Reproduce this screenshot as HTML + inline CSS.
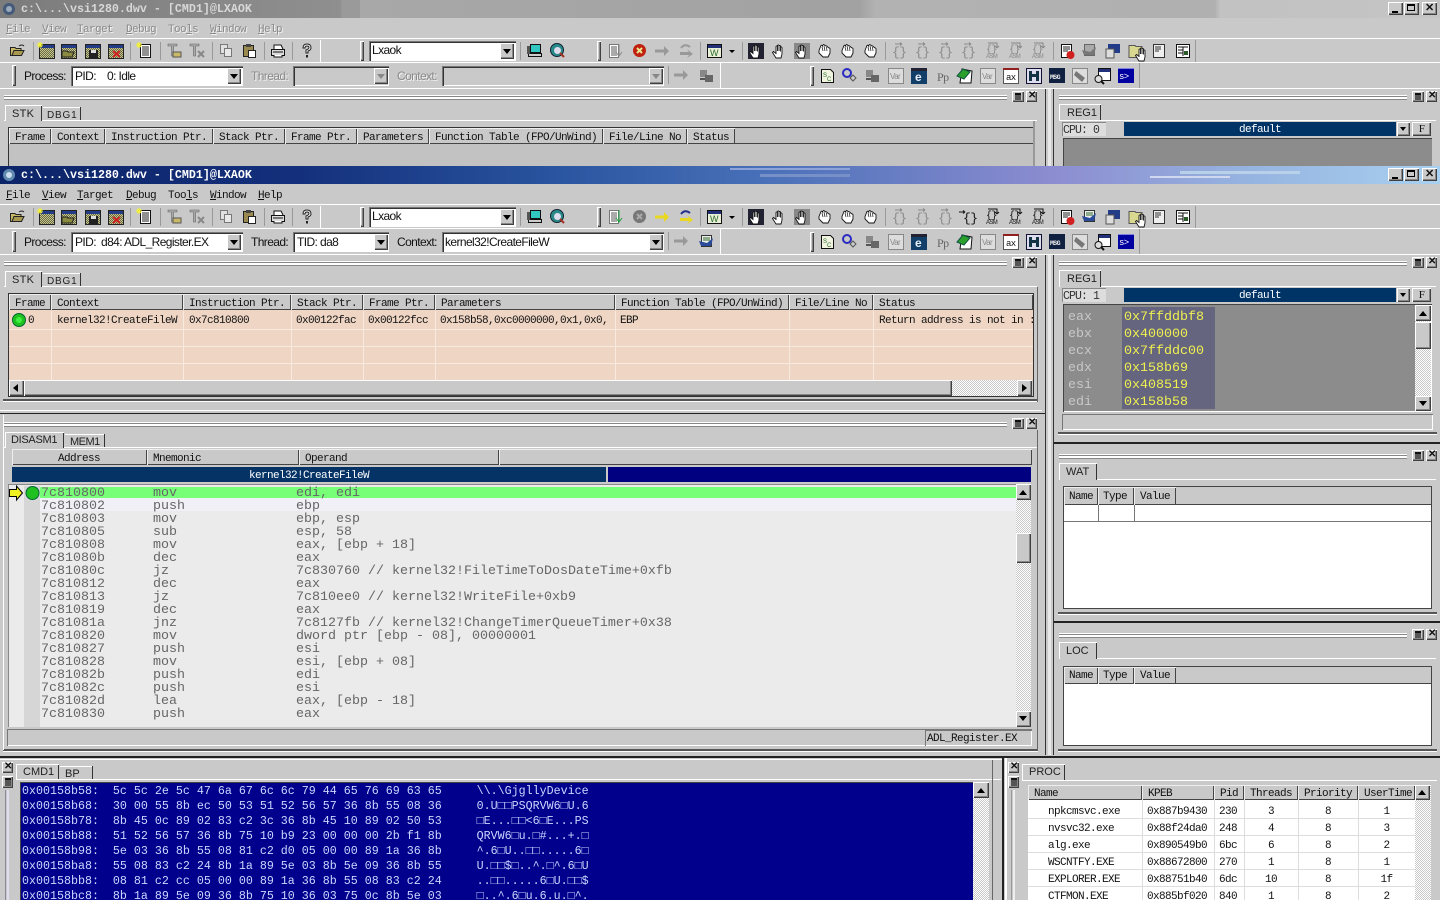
<!DOCTYPE html>
<html><head><meta charset="utf-8"><title>WinDbg</title>
<style>
html,body{margin:0;padding:0;background:#c9c9c9}
#p{position:relative;width:1440px;height:900px;overflow:hidden;background:#c9c9c9;font:11px/12px "Liberation Mono",monospace;letter-spacing:-.6px;color:#111}
#p div,#p span.t,#p svg.o{position:absolute}
.t{white-space:pre}
.s{font-family:"Liberation Sans",sans-serif;font-size:12px;line-height:14px;letter-spacing:-.6px;color:#111}
.u{text-decoration:underline}
.r{background:#c9c9c9;box-shadow:inset 1px 1px #fff,inset -1px -1px #404040,inset -2px -2px #888}
.n{box-shadow:inset 1px 1px #777,inset 2px 2px #333,inset -1px -1px #fff}
.h{background:#c9c9c9;box-shadow:inset 1px 1px #eee,inset -1px -1px #444;line-height:20px;padding-left:6px;box-sizing:border-box;white-space:pre;overflow:hidden}
.g{height:1px;background:#fff;border-bottom:1px solid #888;box-shadow:0 2px #fff,0 3px #888}
.d{background:repeating-conic-gradient(#fff 0 25%,#c9c9c9 0 50%) 0 0/2px 2px}
.tab{background:#c9c9c9;box-shadow:inset 1px 1px #fff,inset -1px 0 #333;font:11px/16px "Liberation Sans",sans-serif;letter-spacing:0;padding-left:7px;box-sizing:border-box;color:#222}
.tb{box-shadow:inset -1px 0 #333,inset 0 1px #fff;padding-top:2px}
.l{background:#999;width:1px}
.code{font:13.33px/13px "Liberation Mono",monospace;letter-spacing:0;color:#666;white-space:pre}
.reg{font:13.33px/17px "Liberation Mono",monospace;letter-spacing:0;white-space:pre}
.hex{font:11.67px/15px "Liberation Mono","Noto Sans CJK SC",monospace;letter-spacing:0;color:#ccd6ff;white-space:pre}
.c{text-align:center}
.off{color:#8a8a8a;text-shadow:1px 1px #f2f2f2}
</style></head><body><div id="p">

<svg width="0" height="0" style="position:absolute"><defs>
<pattern id="dit" width="2" height="2" patternUnits="userSpaceOnUse"><rect width="2" height="2" fill="#c4c490"/><rect width="1" height="1" fill="#6a6a40"/><rect x="1" y="1" width="1" height="1" fill="#6a6a40"/></pattern>
<g id="open"><path d="M0.500 12.500V4.500H5l1 1h5v2H4l-2 5z" fill="#c8b868" stroke="#222"/><path d="M2 12.500L4 7.500h10l-2.500 5z" fill="#a89850" stroke="#222"/><path d="M9 3q3-2 5 0" fill="none" stroke="#222"/></g>
<g id="ws"><rect x="1.500" y="1.500" width="15" height="14" fill="url(#dit)" stroke="#222"/><rect x="2" y="2" width="14" height="3" fill="#223c88"/></g>
<g id="wso"><use href="#ws"/><path d="M2 14V8h5l1 1h6l-2 5z" fill="#8a8a40" stroke="#222"/></g>
<g id="wss"><use href="#ws"/><rect x="5" y="7" width="9" height="8" fill="#222"/><rect x="7" y="7" width="5" height="3" fill="#ddd"/></g>
<g id="wsx"><use href="#ws"/><path d="M6 8l7 6M13 8l-7 6" stroke="#d02020" stroke-width="2"/></g>
<g id="star"><path d="M3 0v6M0 3h6M1 1l4 4M5 1L1 5" stroke="#f4f430"/></g>
<g id="note"><rect x="3.500" y="1.500" width="10" height="13" fill="#fff" stroke="#111"/><path d="M5 4h7M5 6h7M5 8h7M5 10h7M5 12h7" stroke="#222"/></g>
<g id="copy"><rect x="1.500" y="1.500" width="7" height="9" fill="#e0e0e0" stroke="#777"/><rect x="5.500" y="5.500" width="7" height="8" fill="#e8e8e8" stroke="#777"/></g>
<g id="paste"><rect x="1.500" y="2.500" width="10" height="11" fill="#9a8a50" stroke="#222"/><rect x="4" y="1" width="5" height="3" fill="#444"/><rect x="6.500" y="7.500" width="7" height="7" fill="#fff" stroke="#222"/></g>
<g id="print"><rect x="1.500" y="6.500" width="13" height="6" fill="#ddd" stroke="#111"/><path d="M4 6V2h7l2 4M4 12v2h8v-2" fill="#fff" stroke="#111"/><path d="M3 9h10" stroke="#111"/></g>
<g id="help"><path d="M3 5q0-4 4-4t4 4q0 2-3 3v2H6V7q3-1 3-2.500T7 3 5 5z" fill="#fff" stroke="#222"/><rect x="6" y="12" width="2" height="2.500" fill="#222"/></g>
<g id="t"><path d="M1 1h9v2H6.500v10h-2V3H1z" fill="#aaa" stroke="#666" stroke-width=".6"/><path d="M6 9h8v5H6z" fill="#c8b868" stroke="#555"/></g>
<g id="tx"><path d="M1 1h9v2H6.500v10h-2V3H1z" fill="#aaa" stroke="#666" stroke-width=".6"/><path d="M9 8l6 6M15 8l-6 6" stroke="#888" stroke-width="2"/></g>
<g id="pc"><rect x="3.500" y="1.500" width="10" height="8" fill="#30c8c0" stroke="#111"/><rect x="1.500" y="10.500" width="13" height="3" fill="#ccc" stroke="#111"/><rect x="0" y="3" width="3" height="8" fill="#555"/></g>
<g id="find"><circle cx="7" cy="7" r="6.500" fill="#2a8a8a" stroke="#123"/><circle cx="7.500" cy="7.500" r="3.500" fill="#dde"/><path d="M10 10l4 4" stroke="#a03020" stroke-width="2"/></g>
<g id="list"><rect x="1.500" y="1.500" width="9" height="13" fill="#fff" stroke="#777"/><path d="M3 4h6M3 6h6M3 8h6M3 10h6M3 12h6" stroke="#555"/></g>
<g id="hand"><path d="M5 15L1.500 9.500l1-1L5 10.500V3.500a.8.800 0 011.500 0V8V2.500a.8.800 0 011.500 0V8V3a.8.800 0 011.500 0V8.500V4.500a.8.800 0 011.500 0V11l-1 4z" fill="#fff" stroke="#111" stroke-width=".9"/></g>
<g id="hand2"><path d="M2 7.500L4 2.500a.8.800 0 011.400.500L6 2a.8.800 0 011.400 0L9 3a.8.800 0 011.200.600L12 5a.8.800 0 011 .800V10l-2 4H6L2 10z" fill="#fff" stroke="#111" stroke-width=".9"/><path d="M5 4l1 4M7 3l1 5M9.500 4l.500 4" stroke="#111" stroke-width=".7"/></g>
<g id="w"><rect x="1.500" y="1.500" width="14" height="13" fill="#e8f0d8" stroke="#111"/><rect x="2" y="2" width="13" height="3" fill="#22307a"/><text x="4" y="13" font-family="Liberation Sans,sans-serif" font-size="9" fill="#2a6a2a">W</text></g>
<g id="brace"><text x="0" y="12" font-family="Liberation Mono,monospace" font-size="13" fill="#8a8a8a">{}</text><path d="M3 0h7M10 0l-2-1.500M10 0l-2 1.500" stroke="#8a8a8a" fill="none"/></g>
<g id="braced"><text x="2" y="12" font-family="Liberation Mono,monospace" font-size="13" fill="#111">{}</text><path d="M-2 2h6M4 2L2 .5M4 2L2 3.500" stroke="#111" fill="none"/></g>
<g id="asm"><text x="1" y="8" font-family="Liberation Mono,monospace" font-size="10" fill="#111">{}</text><path d="M3 -1h9v5M12 4l-2-2M12 4l2-2" stroke="#111" fill="none"/><text x="1" y="14" font-family="Liberation Sans,sans-serif" font-size="6" fill="#111">ASM</text></g>
<g id="asmo"><text x="1" y="8" font-family="Liberation Mono,monospace" font-size="10" fill="#888">{}</text><path d="M3 -1h9v5M12 4l-2-2M12 4l2-2" stroke="#888" fill="none"/><text x="1" y="14" font-family="Liberation Sans,sans-serif" font-size="6" fill="#888">ASM</text></g>
<g id="src"><path d="M2.500 1.500h9l3 3v10h-12z" fill="#f0f4e0" stroke="#111"/><text x="4" y="9" font-family="Liberation Sans,sans-serif" font-size="6" fill="#2a6a2a">S</text><text x="8" y="13" font-family="Liberation Sans,sans-serif" font-size="6" fill="#2a6a2a">C</text></g>
<g id="gears"><circle cx="5" cy="5" r="4" fill="none" stroke="#2a2ac0" stroke-width="2"/><path d="M11 7l3 3-3 3-3-3z" fill="none" stroke="#555"/></g>
<g id="boxes"><rect x="1" y="2" width="7" height="7" fill="#888"/><rect x="6" y="7" width="8" height="7" fill="#666"/><path d="M1 11h5" stroke="#555" stroke-width="2"/></g>
<g id="var"><rect x="0.500" y="0.500" width="15" height="15" fill="#ddd" stroke="#888"/><text x="2" y="11" font-family="Liberation Sans,sans-serif" font-size="8" fill="#888">Var</text></g>
<g id="e"><rect width="16" height="16" fill="#123e6a"/><rect y="0" width="16" height="3" fill="#223"/><text x="4" y="13" font-family="Liberation Sans,sans-serif" font-size="12" font-weight="bold" fill="#e8f0f8">e</text></g>
<g id="pp"><text x="2" y="13" font-family="Liberation Serif,serif" font-size="12" fill="#666">Pp</text></g>
<g id="card"><path d="M5 1l10 2-1 12H3z" fill="#fff" stroke="#111"/><path d="M0 8l6-7 7 3-6 7z" fill="#2aa02a" stroke="#154"/></g>
<g id="ax"><rect x="0.500" y="0.500" width="15" height="15" fill="#fff" stroke="#555"/><rect width="16" height="2" fill="#902020"/><text x="3" y="12" font-family="Liberation Mono,monospace" font-size="9" fill="#111">ax</text></g>
<g id="m"><rect x="0.500" y="0.500" width="15" height="15" fill="#dde" stroke="#113"/><path d="M3 3h3v10H3zM10 3h3v10h-3zM6 6h4v3H6z" fill="#134"/></g>
<g id="msg"><rect width="16" height="15" fill="#102040"/><text x="1" y="11" font-family="Liberation Mono,monospace" font-size="6.500" font-weight="bold" fill="#eee">MSG</text></g>
<g id="tag"><rect x="0.500" y="0.500" width="15" height="15" fill="#ddd" stroke="#888"/><path d="M4 3l9 7-3 4-8-7z" fill="#777"/></g>
<g id="dbg"><rect x="3.500" y="0.500" width="12" height="12" fill="#fff" stroke="#111"/><rect x="4" y="1" width="11" height="3" fill="#22307a"/><circle cx="3.500" cy="11" r="3.500" fill="#ddd" stroke="#111"/><path d="M6 13l3 3" stroke="#111" stroke-width="2"/></g>
<g id="cmd"><rect width="16" height="15" fill="#0000a0"/><rect y="0" width="16" height="1" fill="#8080e0"/><text x="1" y="11" font-family="Liberation Mono,monospace" font-size="9" fill="#fff">s&gt;</text></g>
<g id="fr"><rect x="2.500" y="1.500" width="10" height="13" fill="#fff" stroke="#111"/><path d="M4 4h7M4 6h7M4 8h5" stroke="#222"/><circle cx="11.500" cy="12" r="4" fill="#d02020"/></g>
<g id="fg"><rect x="2.500" y="1.500" width="10" height="11" fill="#aaa" stroke="#666"/><path d="M0 7l8 2 6-5-2 8H2z" fill="#777"/></g>
<g id="fc"><rect x="3" y="1" width="12" height="9" fill="#223c88"/><rect x="1" y="6" width="8" height="9" fill="#ddd" stroke="#555"/></g>
<g id="fgc"><rect x="2.500" y="1.500" width="10" height="11" fill="#eee" stroke="#333"/><path d="M4 4h7M4 6h7" stroke="#2a6a2a"/><path d="M0 7l8 2 6-5-2 8H2z" fill="#2a4a9a"/></g>
<g id="fy"><path d="M1 2.500h6l1 1h6v11H1z" fill="#d8d890" stroke="#555"/></g>
<g id="dz"><rect x="2.500" y="1.500" width="11" height="13" fill="#eee" stroke="#333"/><path d="M4 4h6M4 6h6M4 8h4" stroke="#333"/></g>
<g id="vw"><rect x="1.500" y="1.500" width="13" height="13" fill="#fff" stroke="#111"/><path d="M3 4h10M3 7h5M3 10h5M8 4v9" stroke="#111"/><rect x="9" y="8" width="4" height="4" fill="#2a5a2a"/></g>
<g id="arrO"><path d="M0 5.500h9V2l5 5-5 5V8.500H0z" fill="#999"/></g>
<g id="arrY"><path d="M0 5.500h9V2l5 5-5 5V8.500H0z" fill="#e8d820"/></g>
<g id="stp"><circle cx="7.500" cy="7.500" r="6.500" fill="#c02010"/><path d="M5 5l5 5M10 5l-5 5" stroke="#e8e890" stroke-width="2"/></g>
<g id="stpo"><circle cx="7.500" cy="7.500" r="6.500" fill="#777"/><path d="M5 5l5 5M10 5l-5 5" stroke="#aaa" stroke-width="2"/></g>
<g id="over"><path d="M2 9h9l-2-3 6 5-6 4 2-3H2z" fill="#999"/><path d="M3 5q4-5 9-1" stroke="#999" stroke-width="2" fill="none"/></g>
<g id="overy"><path d="M2 9h9l-2-3 6 5-6 4 2-3H2z" fill="#e8d820"/><path d="M3 5q4-5 9-1" stroke="#24308a" stroke-width="2" fill="none"/></g>
<g id="t1lines"><path d="M33.500 42v18M130.500 42v18M160.500 42v18M212.500 42v18M264.500 42v18M292.500 42v18M520.500 42v18M700.500 42v18M742.500 42v18M885.500 42v18M1053.500 42v18" stroke="#999"/></g>
</defs></svg>

<!-- ============ BACK WINDOW ============ -->
<div style="left:0;top:0;width:1440px;height:18px;background:linear-gradient(90deg,#7c7c7c,#8f8f8f 340px,#a8a8a8 345px,#a2a2a2 860px,#b2b2b2 875px,#b0b0b0 1215px,#c2c2c2 1220px,#c4c4c4)"></div>
<div style="left:342px;top:0;width:18px;height:18px;background:#9a9a9a"></div>
<svg class="o" style="left:1px;top:1px" width="16" height="16"><circle cx="8" cy="8" r="6" fill="#445a78"/><circle cx="8" cy="8" r="3" fill="#9ab"/></svg>
<span class="t" style="left:21px;top:2px;font:bold 11.67px/14px 'Liberation Mono',monospace;letter-spacing:0;color:#d8d8d8">c:\...\vsi1280.dwv - [CMD1]@LXAOK</span>
<div class="r" style="left:1388px;top:2px;width:15px;height:13px"></div><div style="left:1392px;top:11px;width:6px;height:2px;background:#000"></div>
<div class="r" style="left:1404px;top:2px;width:15px;height:13px"></div><div style="left:1407px;top:4px;width:8px;height:7px;border:1px solid #000;box-sizing:border-box;border-top-width:2px"></div>
<div class="r" style="left:1422px;top:2px;width:15px;height:13px"></div><span class="t" style="left:1425px;top:2px;font:bold 11px/12px 'Liberation Sans',sans-serif">✕</span>

<div style="left:0;top:38px;width:1440px;height:1px;background:#fff"></div>
<span class="t off" style="left:6px;top:24px"><span class="u">F</span>ile</span>
<span class="t off" style="left:42px;top:24px"><span class="u">V</span>iew</span>
<span class="t off" style="left:77px;top:24px"><span class="u">T</span>arget</span>
<span class="t off" style="left:126px;top:24px"><span class="u">D</span>ebug</span>
<span class="t off" style="left:168px;top:24px">Too<span class="u">l</span>s</span>
<span class="t off" style="left:210px;top:24px"><span class="u">W</span>indow</span>
<span class="t off" style="left:258px;top:24px"><span class="u">H</span>elp</span>
<div style="left:0;top:62px;width:1440px;height:1px;background:#fff"></div>
<div style="left:0;top:88px;width:1440px;height:1px;background:#fff"></div>
<div style="left:320px;top:40px;width:1px;height:22px;background:#fff"></div>
<div class="r" style="left:360px;top:41px;width:4px;height:20px"></div>
<div class="n" style="left:369px;top:41px;width:147px;height:20px;background:#fff"></div>
<span class="t s" style="left:372px;top:43px">Lxaok</span>
<div class="r" style="left:500px;top:43px;width:14px;height:16px"></div><div style="left:503px;top:49px;border:4px solid transparent;border-top:5px solid #000;border-bottom:0"></div>
<div class="r" style="left:597px;top:41px;width:4px;height:20px"></div>
<div style="left:1195px;top:40px;width:1px;height:22px;background:#999"></div>
<div style="left:720px;top:63px;width:1px;height:25px;background:#fff"></div>
<div style="left:1139px;top:63px;width:1px;height:25px;background:#999"></div>
<div class="r" style="left:12px;top:65px;width:4px;height:21px"></div>
<span class="t s" style="left:24px;top:69px">Process:</span>
<div class="n" style="left:71px;top:66px;width:172px;height:20px;background:#fff"></div>
<span class="t s" style="left:75px;top:69px">PID:</span><span class="t s" style="left:107px;top:69px">0: Idle</span>
<div class="r" style="left:227px;top:68px;width:14px;height:16px"></div><div style="left:230px;top:74px;border:4px solid transparent;border-top:5px solid #000;border-bottom:0"></div>
<span class="t s off" style="left:251px;top:69px">Thread:</span>
<div class="n" style="left:293px;top:66px;width:96px;height:20px;background:#c9c9c9"></div>
<div class="r" style="left:374px;top:68px;width:14px;height:16px"></div><div style="left:377px;top:74px;border:4px solid transparent;border-top:5px solid #888;border-bottom:0"></div>
<span class="t s off" style="left:397px;top:69px">Context:</span>
<div class="n" style="left:442px;top:66px;width:222px;height:20px;background:#c9c9c9"></div>
<div class="r" style="left:649px;top:68px;width:14px;height:16px"></div><div style="left:652px;top:74px;border:4px solid transparent;border-top:5px solid #888;border-bottom:0"></div>
<div class="r" style="left:810px;top:66px;width:4px;height:20px"></div>

<svg class="o" style="left:0;top:0" width="1440" height="90">
<use href="#t1lines"/>
<path d="M668.500 66v18" stroke="#999"/>
<use href="#open" x="10" y="43"/><use href="#ws" x="38" y="43"/><use href="#star" x="37" y="42"/><use href="#wso" x="60" y="43"/><use href="#wss" x="84" y="43"/><use href="#wsx" x="107" y="43"/><use href="#note" x="137" y="43"/><use href="#star" x="136" y="42"/>
<use href="#t" x="167" y="43"/><use href="#tx" x="189" y="43"/><use href="#copy" x="219" y="43"/><use href="#paste" x="242" y="43"/><use href="#print" x="270" y="43"/><use href="#help" x="300" y="43"/>
<use href="#pc" x="527" y="43"/><use href="#find" x="550" y="43"/>
<use href="#list" x="608" y="43"/><path d="M619 44v11M616 52l3 4 3-4" stroke="#888" fill="none"/><use href="#stp" x="632" y="43"/><use href="#arrO" x="655" y="44"/><use href="#over" x="678" y="43"/><use href="#w" x="706" y="43"/><path d="M729 50h6l-3 3z" fill="#000"/>
<rect x="748" y="43" width="16" height="16" fill="#223"/><use href="#hand" x="748" y="43"/><use href="#hand" x="771" y="43"/><rect x="794" y="43" width="16" height="16" fill="#888"/><use href="#hand" x="794" y="43"/><use href="#hand2" x="817" y="43"/><use href="#hand2" x="840" y="43"/><use href="#hand2" x="863" y="43"/>
<use href="#brace" x="892" y="44"/><use href="#brace" x="915" y="44"/><use href="#brace" x="938" y="44"/><use href="#brace" x="961" y="44"/><use href="#asmo" x="985" y="44"/><use href="#asmo" x="1008" y="44"/><use href="#asmo" x="1031" y="44"/>
<use href="#fr" x="1059" y="43"/><use href="#fg" x="1082" y="43"/><use href="#fc" x="1105" y="43"/><use href="#fy" x="1128" y="43"/><use href="#hand" x="1134" y="46"/><use href="#dz" x="1151" y="43"/><use href="#vw" x="1175" y="43"/>
<use href="#arrO" x="674" y="68"/><use href="#boxes" x="699" y="68"/>
<use href="#src" x="819" y="68"/><use href="#gears" x="842" y="68"/><use href="#boxes" x="865" y="68"/><use href="#var" x="888" y="68"/><use href="#e" x="911" y="68"/><use href="#pp" x="935" y="68"/><use href="#card" x="957" y="68"/><use href="#var" x="980" y="68"/><use href="#ax" x="1003" y="68"/><use href="#m" x="1026" y="68"/><use href="#msg" x="1049" y="68"/><use href="#tag" x="1072" y="68"/><use href="#dbg" x="1095" y="68"/><use href="#cmd" x="1118" y="68"/>
</svg>

<div class="g" style="left:4px;top:95px;width:1003px"></div>
<div class="g" style="left:1059px;top:95px;width:348px"></div>
<div class="r" style="left:1012px;top:91px;width:12px;height:11px"></div><div style="left:1015px;top:93px;width:6px;height:7px;background:#555;border-top:2px solid #111;box-sizing:border-box"></div>
<div class="r" style="left:1026px;top:91px;width:11px;height:11px"></div><span class="t" style="left:1028px;top:90px;font:bold 10px/12px 'Liberation Sans',sans-serif">✕</span>
<div class="r" style="left:1412px;top:91px;width:12px;height:11px"></div><div style="left:1415px;top:93px;width:6px;height:7px;background:#555;border-top:2px solid #111;box-sizing:border-box"></div>
<div class="r" style="left:1426px;top:91px;width:11px;height:11px"></div><span class="t" style="left:1428px;top:90px;font:bold 10px/12px 'Liberation Sans',sans-serif">✕</span>

<div style="left:4px;top:120px;width:1033px;height:1px;background:#fff"></div>
<div class="tab" style="left:5px;top:105px;width:37px;height:16px;letter-spacing:.3px;line-height:18px">STK</div>
<div class="tab tb" style="left:43px;top:107px;width:38px;height:13px;font-size:10px;line-height:11px;letter-spacing:.8px;padding-left:4px;padding-top:3px">DBG1</div>
<div style="left:8px;top:127px;width:1025px;height:40px;background:#c2c2c2;border-top:1px solid #333;border-left:1px solid #333;box-sizing:border-box"></div>
<div style="left:1033px;top:121px;width:2px;height:45px;background:#999"></div>
<div class="h" style="left:9px;top:128px;width:42px;height:16px">Frame</div>
<div class="h" style="left:51px;top:128px;width:54px;height:16px">Context</div>
<div class="h" style="left:105px;top:128px;width:108px;height:16px">Instruction Ptr.</div>
<div class="h" style="left:213px;top:128px;width:72px;height:16px">Stack Ptr.</div>
<div class="h" style="left:285px;top:128px;width:72px;height:16px">Frame Ptr.</div>
<div class="h" style="left:357px;top:128px;width:72px;height:16px">Parameters</div>
<div class="h" style="left:429px;top:128px;width:174px;height:16px">Function Table (FPO/UnWind)</div>
<div class="h" style="left:603px;top:128px;width:84px;height:16px">File/Line No</div>
<div class="h" style="left:687px;top:128px;width:48px;height:16px">Status</div>
<div style="left:735px;top:143px;width:298px;height:1px;background:#444"></div>

<div style="left:1045px;top:89px;width:1px;height:77px;background:#333"></div>
<div style="left:1048px;top:89px;width:3px;height:77px;background:#e8e8e8"></div>
<div style="left:1053px;top:89px;width:1px;height:77px;background:#333"></div>

<div class="tab" style="left:1059px;top:104px;width:42px;height:17px;padding-left:8px;line-height:18px">REG1</div>
<div style="left:1059px;top:120px;width:377px;height:1px;background:#fff"></div>
<div class="t" style="left:1062px;top:122px;width:44px;height:14px;background:#ddd;box-shadow:inset 1px 1px #888;font:11.5px/17px 'Liberation Mono',monospace;letter-spacing:-.9px;color:#333;padding-left:1px;box-sizing:border-box;overflow:hidden">CPU: 0</div>
<div class="t c" style="left:1124px;top:122px;width:272px;height:14px;background:#003366;color:#fff;font:11px/17px 'Liberation Mono',monospace;letter-spacing:-.6px;overflow:hidden">default</div>
<div class="r" style="left:1397px;top:122px;width:13px;height:14px"></div><div style="left:1400px;top:127px;border:3px solid transparent;border-top:4px solid #000;border-bottom:0"></div>
<div class="r t c" style="left:1412px;top:122px;width:19px;height:14px;font:11px/14px 'Liberation Serif',serif">F</div>
<div style="left:1063px;top:138px;width:369px;height:28px;background:#8c8c8c;box-shadow:inset 1px 1px #444"></div>

<!-- ============ FRONT WINDOW ============ -->
<div style="left:0;top:166px;width:1440px;height:734px;background:#c9c9c9"></div>
<div style="left:0;top:166px;width:1440px;height:18px;background:linear-gradient(90deg,#0c2468,#14307c 300px,#2a55a0 560px,#4870b8 760px,#8c8cd0 1050px,#96b4e0 1250px,#a8d0f0 1440px)"></div>
<div style="left:730px;top:168px;width:120px;height:2px;background:#8ea4d8"></div>
<div style="left:760px;top:174px;width:90px;height:3px;background:#7890c8"></div>
<div style="left:1180px;top:171px;width:120px;height:3px;background:#b8d0e8"></div>
<div style="left:1150px;top:176px;width:80px;height:2px;background:#cfd8ee"></div>
<svg class="o" style="left:1px;top:167px" width="16" height="16"><circle cx="8" cy="8" r="6" fill="#608ab0"/><circle cx="8" cy="8" r="3" fill="#cde"/></svg>
<span class="t" style="left:21px;top:168px;font:bold 11.67px/14px 'Liberation Mono',monospace;letter-spacing:0;color:#fff">c:\...\vsi1280.dwv - [CMD1]@LXAOK</span>
<div class="r" style="left:1388px;top:168px;width:15px;height:13px"></div><div style="left:1392px;top:177px;width:6px;height:2px;background:#000"></div>
<div class="r" style="left:1404px;top:168px;width:15px;height:13px"></div><div style="left:1407px;top:170px;width:8px;height:7px;border:1px solid #000;box-sizing:border-box;border-top-width:2px"></div>
<div class="r" style="left:1422px;top:168px;width:15px;height:13px"></div><span class="t" style="left:1425px;top:168px;font:bold 11px/12px 'Liberation Sans',sans-serif">✕</span>

<div style="left:0;top:204px;width:1440px;height:1px;background:#fff"></div>
<span class="t" style="left:6px;top:190px"><span class="u">F</span>ile</span>
<span class="t" style="left:42px;top:190px"><span class="u">V</span>iew</span>
<span class="t" style="left:77px;top:190px"><span class="u">T</span>arget</span>
<span class="t" style="left:126px;top:190px"><span class="u">D</span>ebug</span>
<span class="t" style="left:168px;top:190px">Too<span class="u">l</span>s</span>
<span class="t" style="left:210px;top:190px"><span class="u">W</span>indow</span>
<span class="t" style="left:258px;top:190px"><span class="u">H</span>elp</span>
<div style="left:0;top:228px;width:1440px;height:1px;background:#fff"></div>
<div style="left:0;top:254px;width:1440px;height:1px;background:#fff"></div>
<div style="left:320px;top:206px;width:1px;height:22px;background:#fff"></div>
<div class="r" style="left:360px;top:207px;width:4px;height:20px"></div>
<div class="n" style="left:369px;top:207px;width:147px;height:20px;background:#fff"></div>
<span class="t s" style="left:372px;top:209px">Lxaok</span>
<div class="r" style="left:500px;top:209px;width:14px;height:16px"></div><div style="left:503px;top:215px;border:4px solid transparent;border-top:5px solid #000;border-bottom:0"></div>
<div class="r" style="left:597px;top:207px;width:4px;height:20px"></div>
<div style="left:1195px;top:206px;width:1px;height:22px;background:#999"></div>
<div style="left:720px;top:229px;width:1px;height:25px;background:#fff"></div>
<div style="left:1139px;top:229px;width:1px;height:25px;background:#999"></div>
<div class="r" style="left:12px;top:231px;width:4px;height:21px"></div>
<span class="t s" style="left:24px;top:235px">Process:</span>
<div class="n" style="left:71px;top:232px;width:172px;height:20px;background:#fff"></div>
<span class="t s" style="left:75px;top:235px">PID:</span><span class="t s" style="left:101px;top:235px">d84: ADL_Register.EX</span>
<div class="r" style="left:227px;top:234px;width:14px;height:16px"></div><div style="left:230px;top:240px;border:4px solid transparent;border-top:5px solid #000;border-bottom:0"></div>
<span class="t s" style="left:251px;top:235px">Thread:</span>
<div class="n" style="left:293px;top:232px;width:96px;height:20px;background:#fff"></div>
<span class="t s" style="left:297px;top:235px">TID: da8</span>
<div class="r" style="left:374px;top:234px;width:14px;height:16px"></div><div style="left:377px;top:240px;border:4px solid transparent;border-top:5px solid #000;border-bottom:0"></div>
<span class="t s" style="left:397px;top:235px">Context:</span>
<div class="n" style="left:442px;top:232px;width:222px;height:20px;background:#fff"></div>
<span class="t s" style="left:445px;top:235px">kernel32!CreateFileW</span>
<div class="r" style="left:649px;top:234px;width:14px;height:16px"></div><div style="left:652px;top:240px;border:4px solid transparent;border-top:5px solid #000;border-bottom:0"></div>
<div class="r" style="left:810px;top:232px;width:4px;height:20px"></div>

<svg class="o" style="left:0;top:166px" width="1440" height="90">
<use href="#t1lines"/>
<path d="M668.500 66v18" stroke="#999"/>
<use href="#open" x="10" y="43"/><use href="#ws" x="38" y="43"/><use href="#star" x="37" y="42"/><use href="#wso" x="60" y="43"/><use href="#wss" x="84" y="43"/><use href="#wsx" x="107" y="43"/><use href="#note" x="137" y="43"/><use href="#star" x="136" y="42"/>
<use href="#t" x="167" y="43"/><use href="#tx" x="189" y="43"/><use href="#copy" x="219" y="43"/><use href="#paste" x="242" y="43"/><use href="#print" x="270" y="43"/><use href="#help" x="300" y="43"/>
<use href="#pc" x="527" y="43"/><use href="#find" x="550" y="43"/>
<use href="#list" x="608" y="43"/><path d="M619 44v11M616 52l3 4 3-4" stroke="#20a040" fill="none"/><use href="#stpo" x="632" y="43"/><use href="#arrY" x="655" y="44"/><use href="#overy" x="678" y="43"/><use href="#w" x="706" y="43"/><path d="M729 50h6l-3 3z" fill="#000"/>
<rect x="748" y="43" width="16" height="16" fill="#223"/><use href="#hand" x="748" y="43"/><use href="#hand" x="771" y="43"/><rect x="794" y="43" width="16" height="16" fill="#888"/><use href="#hand" x="794" y="43"/><use href="#hand2" x="817" y="43"/><use href="#hand2" x="840" y="43"/><use href="#hand2" x="863" y="43"/>
<use href="#brace" x="892" y="44"/><use href="#brace" x="915" y="44"/><use href="#brace" x="938" y="44"/><use href="#braced" x="961" y="44"/><use href="#asm" x="985" y="44"/><use href="#asm" x="1008" y="44"/><use href="#asm" x="1031" y="44"/>
<use href="#fr" x="1059" y="43"/><use href="#fgc" x="1082" y="43"/><use href="#fc" x="1105" y="43"/><use href="#fy" x="1128" y="43"/><use href="#hand" x="1134" y="46"/><use href="#dz" x="1151" y="43"/><use href="#vw" x="1175" y="43"/>
<use href="#arrO" x="674" y="68"/><use href="#fgc" x="699" y="68"/>
<use href="#src" x="819" y="68"/><use href="#gears" x="842" y="68"/><use href="#boxes" x="865" y="68"/><use href="#var" x="888" y="68"/><use href="#e" x="911" y="68"/><use href="#pp" x="935" y="68"/><use href="#card" x="957" y="68"/><use href="#var" x="980" y="68"/><use href="#ax" x="1003" y="68"/><use href="#m" x="1026" y="68"/><use href="#msg" x="1049" y="68"/><use href="#tag" x="1072" y="68"/><use href="#dbg" x="1095" y="68"/><use href="#cmd" x="1118" y="68"/>
</svg>

<!-- splitters -->
<div style="left:1045px;top:255px;width:1px;height:500px;background:#333"></div>
<div style="left:1048px;top:255px;width:3px;height:500px;background:#e8e8e8"></div>
<div style="left:1053px;top:255px;width:1px;height:500px;background:#333"></div>
<div style="left:0;top:410px;width:1042px;height:1px;background:#fff"></div>
<div style="left:0;top:413px;width:1045px;height:1px;background:#222"></div>
<div style="left:1054px;top:442px;width:386px;height:2px;background:#222"></div>
<div style="left:1054px;top:621px;width:386px;height:2px;background:#222"></div>
<div style="left:0;top:756px;width:1440px;height:2px;background:#222"></div>

<!-- stack panel -->
<div class="g" style="left:4px;top:261px;width:1003px"></div>
<div class="r" style="left:1012px;top:257px;width:12px;height:11px"></div><div style="left:1015px;top:259px;width:6px;height:7px;background:#555;border-top:2px solid #111;box-sizing:border-box"></div>
<div class="r" style="left:1026px;top:257px;width:11px;height:11px"></div><span class="t" style="left:1028px;top:256px;font:bold 10px/12px 'Liberation Sans',sans-serif">✕</span>
<div style="left:4px;top:286px;width:1033px;height:1px;background:#fff"></div>
<div class="tab" style="left:5px;top:271px;width:37px;height:16px;letter-spacing:.3px;line-height:18px">STK</div>
<div class="tab tb" style="left:43px;top:273px;width:38px;height:13px;font-size:10px;line-height:11px;letter-spacing:.8px;padding-left:4px;padding-top:3px">DBG1</div>
<div style="left:8px;top:293px;width:1026px;height:104px;border:1px solid #333;box-sizing:border-box;background:#efd6c4"></div>
<div style="left:3px;top:399px;width:1035px;height:2px;background:#555;border-bottom:1px solid #fff"></div>
<div style="left:1037px;top:287px;width:1px;height:115px;background:#666"></div>
<div class="h" style="left:9px;top:294px;width:42px;height:16px">Frame</div>
<div class="h" style="left:51px;top:294px;width:132px;height:16px">Context</div>
<div class="h" style="left:183px;top:294px;width:108px;height:16px">Instruction Ptr.</div>
<div class="h" style="left:291px;top:294px;width:72px;height:16px">Stack Ptr.</div>
<div class="h" style="left:363px;top:294px;width:72px;height:16px">Frame Ptr.</div>
<div class="h" style="left:435px;top:294px;width:180px;height:16px">Parameters</div>
<div class="h" style="left:615px;top:294px;width:174px;height:16px">Function Table (FPO/UnWind)</div>
<div class="h" style="left:789px;top:294px;width:84px;height:16px">File/Line No</div>
<div class="h" style="left:873px;top:294px;width:160px;height:16px">Status</div>
<div style="left:9px;top:329px;width:1024px;height:1px;background:#f8eadf"></div>
<div style="left:9px;top:346px;width:1024px;height:1px;background:#f8eadf"></div>
<div style="left:9px;top:363px;width:1024px;height:1px;background:#f8eadf"></div>
<div style="left:51px;top:311px;width:1px;height:69px;background:#f8eadf"></div>
<div style="left:183px;top:311px;width:1px;height:69px;background:#f8eadf"></div>
<div style="left:291px;top:311px;width:1px;height:69px;background:#f8eadf"></div>
<div style="left:363px;top:311px;width:1px;height:69px;background:#f8eadf"></div>
<div style="left:435px;top:311px;width:1px;height:69px;background:#f8eadf"></div>
<div style="left:615px;top:311px;width:1px;height:69px;background:#f8eadf"></div>
<div style="left:789px;top:311px;width:1px;height:69px;background:#f8eadf"></div>
<div style="left:873px;top:311px;width:1px;height:69px;background:#f8eadf"></div>
<svg class="o" style="left:11px;top:312px" width="16" height="16"><circle cx="8" cy="8" r="6.500" fill="#20c020" stroke="#063"/><circle cx="8" cy="8" r="3" fill="#40f040"/></svg>
<span class="t" style="left:28px;top:315px">0</span>
<span class="t" style="left:57px;top:315px">kernel32!CreateFileW</span>
<span class="t" style="left:189px;top:315px">0x7c810800</span>
<span class="t" style="left:296px;top:315px">0x00122fac</span>
<span class="t" style="left:368px;top:315px">0x00122fcc</span>
<span class="t" style="left:440px;top:315px">0x158b58,0xc0000000,0x1,0x0,</span>
<span class="t" style="left:620px;top:315px">EBP</span>
<span class="t" style="left:879px;top:315px">Return address is not in :</span>
<div style="left:9px;top:380px;width:1024px;height:16px;background:#c9c9c9"></div>
<div class="d" style="left:952px;top:380px;width:65px;height:16px"></div>
<div class="r" style="left:9px;top:380px;width:15px;height:16px"></div><div style="left:13px;top:384px;border:4px solid transparent;border-right:5px solid #000;border-left:0"></div>
<div class="r" style="left:24px;top:380px;width:928px;height:16px"></div>
<div class="r" style="left:1017px;top:380px;width:15px;height:16px"></div><div style="left:1022px;top:384px;border:4px solid transparent;border-left:5px solid #000;border-right:0"></div>

<!-- disasm panel -->
<div class="g" style="left:4px;top:422px;width:1003px"></div>
<div class="r" style="left:1012px;top:418px;width:12px;height:11px"></div><div style="left:1015px;top:420px;width:6px;height:7px;background:#555;border-top:2px solid #111;box-sizing:border-box"></div>
<div class="r" style="left:1026px;top:418px;width:11px;height:11px"></div><span class="t" style="left:1028px;top:417px;font:bold 10px/12px 'Liberation Sans',sans-serif">✕</span>
<div style="left:4px;top:447px;width:1033px;height:1px;background:#fff"></div>
<div class="tab" style="left:5px;top:432px;width:59px;height:16px;letter-spacing:-.3px;padding-left:6px">DISASM1</div>
<div class="tab tb" style="left:65px;top:434px;width:40px;height:13px;letter-spacing:-.5px;line-height:12px;padding-left:5px">MEM1</div>
<div class="h" style="left:12px;top:449px;width:135px;height:16px;padding-left:46px">Address</div>
<div class="h" style="left:147px;top:449px;width:152px;height:16px">Mnemonic</div>
<div class="h" style="left:299px;top:449px;width:200px;height:16px">Operand</div>
<div class="h" style="left:499px;top:449px;width:533px;height:16px"></div>
<div class="t c" style="left:12px;top:467px;width:594px;height:15px;background:#053366;color:#fff;font:11px/18px 'Liberation Mono',monospace;letter-spacing:-.6px;overflow:hidden">kernel32!CreateFileW</div>
<div style="left:608px;top:467px;width:423px;height:15px;background:#000080"></div>
<div style="left:8px;top:484px;width:1008px;height:243px;background:#ebebeb;box-shadow:inset 1px 1px #888"></div>
<div style="left:24px;top:486px;width:16px;height:241px;background:#d6d6d6"></div>
<div style="left:40px;top:487px;width:976px;height:11px;background:#77ff77"></div>
<div style="left:40px;top:498px;width:976px;height:13px;background:#f0f0f6"></div>
<div style="left:1016px;top:484px;width:15px;height:243px" class="d"></div>
<div class="r" style="left:1016px;top:484px;width:15px;height:16px"></div><div style="left:1019px;top:490px;border:4px solid transparent;border-bottom:5px solid #000;border-top:0"></div>
<div class="r" style="left:1016px;top:533px;width:15px;height:30px"></div>
<div class="r" style="left:1016px;top:711px;width:15px;height:16px"></div><div style="left:1019px;top:716px;border:4px solid transparent;border-top:5px solid #000;border-bottom:0"></div>
<svg class="o" style="left:8px;top:484px" width="32" height="18"><path d="M1.500 5.500h7V2l6 7-6 7v-3.500h-7z" fill="#f0f020" stroke="#000"/><circle cx="24.500" cy="9" r="6.500" fill="#20c020" stroke="#063"/></svg>
<div class="code" style="left:41px;top:487px">7c810800
7c810802
7c810803
7c810805
7c810808
7c81080b
7c81080c
7c810812
7c810813
7c810819
7c81081a
7c810820
7c810827
7c810828
7c81082b
7c81082c
7c81082d
7c810830</div>
<div class="code" style="left:153px;top:487px">mov
push
mov
sub
mov
dec
jz
dec
jz
dec
jnz
mov
push
mov
push
push
lea
push</div>
<div class="code" style="left:296px;top:487px">edi, edi
ebp
ebp, esp
esp, 58
eax, [ebp + 18]
eax
7c830760 // kernel32!FileTimeToDosDateTime+0xfb
eax
7c810ee0 // kernel32!WriteFile+0xb9
eax
7c8127fb // kernel32!ChangeTimerQueueTimer+0x38
dword ptr [ebp - 08], 00000001
esi
esi, [ebp + 08]
edi
esi
eax, [ebp - 18]
eax</div>
<div style="left:7px;top:729px;width:1025px;height:17px;background:#c9c9c9;box-shadow:inset 1px 1px #777,inset -1px -1px #fff"></div>
<div class="t" style="left:925px;top:730px;width:107px;height:16px;box-shadow:inset 1px 1px #777;line-height:19px;padding-left:2px;box-sizing:border-box;overflow:hidden">ADL_Register.EX</div>
<div style="left:3px;top:749px;width:1035px;height:2px;background:#555;border-bottom:1px solid #fff"></div>
<div style="left:3px;top:415px;width:1px;height:335px;background:#fff"></div>
<div style="left:1037px;top:430px;width:1px;height:320px;background:#666"></div>

<!-- REG panel -->
<div class="g" style="left:1059px;top:261px;width:348px"></div>
<div class="r" style="left:1412px;top:257px;width:12px;height:11px"></div><div style="left:1415px;top:259px;width:6px;height:7px;background:#555;border-top:2px solid #111;box-sizing:border-box"></div>
<div class="r" style="left:1426px;top:257px;width:11px;height:11px"></div><span class="t" style="left:1428px;top:256px;font:bold 10px/12px 'Liberation Sans',sans-serif">✕</span>
<div style="left:1059px;top:286px;width:377px;height:1px;background:#fff"></div>
<div class="tab" style="left:1059px;top:270px;width:42px;height:17px;padding-left:8px;line-height:18px">REG1</div>
<div class="t" style="left:1062px;top:288px;width:44px;height:14px;background:#ddd;box-shadow:inset 1px 1px #888;font:11.5px/17px 'Liberation Mono',monospace;letter-spacing:-.9px;color:#333;padding-left:1px;box-sizing:border-box;overflow:hidden">CPU: 1</div>
<div class="t c" style="left:1124px;top:288px;width:272px;height:14px;background:#003366;color:#fff;font:11px/17px 'Liberation Mono',monospace;letter-spacing:-.6px;overflow:hidden">default</div>
<div class="r" style="left:1397px;top:288px;width:13px;height:14px"></div><div style="left:1400px;top:293px;border:3px solid transparent;border-top:4px solid #000;border-bottom:0"></div>
<div class="r t c" style="left:1412px;top:288px;width:19px;height:14px;font:11px/14px 'Liberation Serif',serif">F</div>
<div style="left:1063px;top:304px;width:369px;height:108px;background:#8c8c8c;box-shadow:inset 1px 1px #444,inset -1px -1px #fff"></div>
<div style="left:1122px;top:307px;width:93px;height:102px;background:#656580"></div>
<div class="reg" style="left:1068px;top:309px;color:#c8c8c8">eax
ebx
ecx
edx
esi
edi</div>
<div class="reg" style="left:1124px;top:309px;color:#f0f050">0x7ffddbf8
0x400000
0x7ffddc00
0x158b69
0x408519
0x158b58</div>
<div class="d" style="left:1415px;top:305px;width:16px;height:106px"></div>
<div class="r" style="left:1415px;top:305px;width:16px;height:16px"></div><div style="left:1419px;top:311px;border:4px solid transparent;border-bottom:5px solid #000;border-top:0"></div>
<div class="r" style="left:1415px;top:322px;width:16px;height:27px"></div>
<div class="r" style="left:1415px;top:396px;width:16px;height:15px"></div><div style="left:1419px;top:401px;border:4px solid transparent;border-top:5px solid #000;border-bottom:0"></div>
<div style="left:1062px;top:414px;width:371px;height:16px;box-shadow:inset 1px 1px #777,inset -1px -1px #fff"></div>
<div style="left:1058px;top:432px;width:379px;height:2px;background:#555;border-bottom:1px solid #fff"></div>

<!-- WAT panel -->
<div class="g" style="left:1059px;top:454px;width:348px"></div>
<div class="r" style="left:1412px;top:450px;width:12px;height:11px"></div><div style="left:1415px;top:452px;width:6px;height:7px;background:#555;border-top:2px solid #111;box-sizing:border-box"></div>
<div class="r" style="left:1426px;top:450px;width:11px;height:11px"></div><span class="t" style="left:1428px;top:449px;font:bold 10px/12px 'Liberation Sans',sans-serif">✕</span>
<div style="left:1059px;top:479px;width:377px;height:1px;background:#fff"></div>
<div class="tab" style="left:1059px;top:463px;width:38px;height:17px;line-height:18px">WAT</div>
<div style="left:1063px;top:486px;width:369px;height:123px;background:#fff;border:1px solid #444;box-sizing:border-box"></div>
<div class="h" style="left:1064px;top:487px;width:34px;height:18px;line-height:20px;padding-left:5px">Name</div>
<div class="h" style="left:1098px;top:487px;width:36px;height:18px;line-height:20px;padding-left:5px">Type</div>
<div class="h" style="left:1134px;top:487px;width:42px;height:18px;line-height:20px;padding-left:6px">Value</div>
<div style="left:1176px;top:487px;width:255px;height:18px;background:#c9c9c9;border-bottom:1px solid #444;box-sizing:border-box"></div>
<div style="left:1098px;top:505px;width:1px;height:16px;background:#777"></div>
<div style="left:1134px;top:505px;width:1px;height:16px;background:#777"></div>
<div style="left:1064px;top:521px;width:367px;height:1px;background:#777"></div>
<div style="left:1058px;top:612px;width:379px;height:2px;background:#555;border-bottom:1px solid #fff"></div>

<!-- LOC panel -->
<div class="g" style="left:1059px;top:633px;width:348px"></div>
<div class="r" style="left:1412px;top:629px;width:12px;height:11px"></div><div style="left:1415px;top:631px;width:6px;height:7px;background:#555;border-top:2px solid #111;box-sizing:border-box"></div>
<div class="r" style="left:1426px;top:629px;width:11px;height:11px"></div><span class="t" style="left:1428px;top:628px;font:bold 10px/12px 'Liberation Sans',sans-serif">✕</span>
<div style="left:1059px;top:658px;width:377px;height:1px;background:#fff"></div>
<div class="tab" style="left:1059px;top:642px;width:38px;height:17px;line-height:18px">LOC</div>
<div style="left:1063px;top:666px;width:369px;height:80px;background:#fff;border:1px solid #444;box-sizing:border-box"></div>
<div class="h" style="left:1064px;top:667px;width:34px;height:17px;line-height:19px;padding-left:5px">Name</div>
<div class="h" style="left:1098px;top:667px;width:36px;height:17px;line-height:19px;padding-left:5px">Type</div>
<div class="h" style="left:1134px;top:667px;width:42px;height:17px;line-height:19px;padding-left:6px">Value</div>
<div style="left:1176px;top:667px;width:255px;height:17px;background:#c9c9c9;border-bottom:1px solid #444;box-sizing:border-box"></div>
<div style="left:1058px;top:749px;width:379px;height:2px;background:#555;border-bottom:1px solid #fff"></div>

<!-- CMD panel -->
<div style="left:0;top:759px;width:1002px;height:1px;background:#fff"></div>
<div class="r" style="left:2px;top:762px;width:11px;height:11px"></div><span class="t" style="left:4px;top:761px;font:bold 10px/12px 'Liberation Sans',sans-serif">✕</span>
<div class="r" style="left:2px;top:776px;width:11px;height:12px"></div><div style="left:5px;top:778px;width:6px;height:8px;background:#555;border-top:2px solid #111;box-sizing:border-box"></div>
<div style="left:5px;top:790px;width:1px;height:110px;background:#889"></div>
<div style="left:7px;top:790px;width:2px;height:110px;background:#dde"></div>
<div class="tab" style="left:16px;top:764px;width:43px;height:16px">CMD1</div>
<div class="tab tb" style="left:60px;top:766px;width:33px;height:13px;line-height:13px;padding-left:5px">BP</div>
<div style="left:16px;top:779px;width:985px;height:1px;background:#fff"></div>
<div style="left:20px;top:782px;width:953px;height:118px;background:#00008c;box-shadow:inset 1px 1px #444"></div>
<div class="hex" style="left:22px;top:784px">0x00158b58:  5c 5c 2e 5c 47 6a 67 6c 6c 79 44 65 76 69 63 65     \\.\GjgllyDevice
0x00158b68:  30 00 55 8b ec 50 53 51 52 56 57 36 8b 55 08 36     0.U□□PSQRVW6□U.6
0x00158b78:  8b 45 0c 89 02 83 c2 3c 36 8b 45 10 89 02 50 53     □E...□□&lt;6□E...PS
0x00158b88:  51 52 56 57 36 8b 75 10 b9 23 00 00 00 2b f1 8b     QRVW6□u.□#...+.□
0x00158b98:  5e 03 36 8b 55 08 81 c2 d0 05 00 00 89 1a 36 8b     ^.6□U..□□.....6□
0x00158ba8:  55 08 83 c2 24 8b 1a 89 5e 03 8b 5e 09 36 8b 55     U.□□$□..^.□^.6□U
0x00158bb8:  08 81 c2 cc 05 00 00 89 1a 36 8b 55 08 83 c2 24     ..□□.....6□U.□□$
0x00158bc8:  8b 1a 89 5e 09 36 8b 75 10 36 03 75 0c 8b 5e 03     □..^.6□u.6.u.□^.</div>
<div class="d" style="left:973px;top:782px;width:16px;height:118px"></div>
<div class="r" style="left:973px;top:782px;width:16px;height:16px"></div><div style="left:977px;top:788px;border:4px solid transparent;border-bottom:5px solid #000;border-top:0"></div>
<div style="left:992px;top:760px;width:1px;height:140px;background:#666"></div>
<div style="left:1002px;top:758px;width:2px;height:142px;background:#222"></div>
<div style="left:1005px;top:758px;width:2px;height:142px;background:#fff"></div>

<!-- PROC panel -->
<div class="r" style="left:1008px;top:762px;width:11px;height:11px"></div><span class="t" style="left:1010px;top:761px;font:bold 10px/12px 'Liberation Sans',sans-serif">✕</span>
<div class="r" style="left:1008px;top:776px;width:11px;height:12px"></div><div style="left:1011px;top:778px;width:6px;height:8px;background:#555;border-top:2px solid #111;box-sizing:border-box"></div>
<div style="left:1011px;top:790px;width:1px;height:110px;background:#999"></div>
<div style="left:1013px;top:790px;width:2px;height:110px;background:#eee"></div>
<div class="tab" style="left:1022px;top:764px;width:43px;height:17px">PROC</div>
<div style="left:1022px;top:780px;width:415px;height:1px;background:#fff"></div>
<div style="left:1028px;top:800px;width:387px;height:100px;background:#fff"></div>
<div class="h" style="left:1028px;top:785px;width:114px;height:15px;padding-left:6px;line-height:18px">Name</div>
<div class="h" style="left:1142px;top:785px;width:72px;height:15px;line-height:18px">KPEB</div>
<div class="h" style="left:1214px;top:785px;width:30px;height:15px;line-height:18px">Pid</div>
<div class="h" style="left:1244px;top:785px;width:54px;height:15px;line-height:18px">Threads</div>
<div class="h" style="left:1298px;top:785px;width:60px;height:15px;line-height:18px">Priority</div>
<div class="h" style="left:1358px;top:785px;width:57px;height:15px;line-height:18px">UserTime</div>
<div class="d" style="left:1415px;top:785px;width:16px;height:115px"></div>
<div class="r" style="left:1415px;top:785px;width:15px;height:15px"></div><div style="left:1418px;top:790px;border:4px solid transparent;border-bottom:5px solid #000;border-top:0"></div>
<div style="left:1028px;top:818px;width:387px;height:1px;background:#ddd"></div>
<div style="left:1028px;top:835px;width:387px;height:1px;background:#ddd"></div>
<div style="left:1028px;top:852px;width:387px;height:1px;background:#ddd"></div>
<div style="left:1028px;top:869px;width:387px;height:1px;background:#ddd"></div>
<div style="left:1028px;top:886px;width:387px;height:1px;background:#ddd"></div>
<div style="left:1142px;top:800px;width:1px;height:100px;background:#ddd"></div>
<div style="left:1214px;top:800px;width:1px;height:100px;background:#ddd"></div>
<div style="left:1244px;top:800px;width:1px;height:100px;background:#ddd"></div>
<div style="left:1298px;top:800px;width:1px;height:100px;background:#ddd"></div>
<div style="left:1358px;top:800px;width:1px;height:100px;background:#ddd"></div>

<span class="t" style="left:1048px;top:806px">npkcmsvc.exe</span><span class="t" style="left:1147px;top:806px">0x887b9430</span><span class="t" style="left:1219px;top:806px">230</span><span class="t c" style="left:1244px;top:806px;width:54px">3</span><span class="t c" style="left:1298px;top:806px;width:60px">8</span><span class="t c" style="left:1358px;top:806px;width:57px">1</span>
<span class="t" style="left:1048px;top:823px">nvsvc32.exe</span><span class="t" style="left:1147px;top:823px">0x88f24da0</span><span class="t" style="left:1219px;top:823px">248</span><span class="t c" style="left:1244px;top:823px;width:54px">4</span><span class="t c" style="left:1298px;top:823px;width:60px">8</span><span class="t c" style="left:1358px;top:823px;width:57px">3</span>
<span class="t" style="left:1048px;top:840px">alg.exe</span><span class="t" style="left:1147px;top:840px">0x890549b0</span><span class="t" style="left:1219px;top:840px">6bc</span><span class="t c" style="left:1244px;top:840px;width:54px">6</span><span class="t c" style="left:1298px;top:840px;width:60px">8</span><span class="t c" style="left:1358px;top:840px;width:57px">2</span>
<span class="t" style="left:1048px;top:857px">WSCNTFY.EXE</span><span class="t" style="left:1147px;top:857px">0x88672800</span><span class="t" style="left:1219px;top:857px">270</span><span class="t c" style="left:1244px;top:857px;width:54px">1</span><span class="t c" style="left:1298px;top:857px;width:60px">8</span><span class="t c" style="left:1358px;top:857px;width:57px">1</span>
<span class="t" style="left:1048px;top:874px">EXPLORER.EXE</span><span class="t" style="left:1147px;top:874px">0x88751b40</span><span class="t" style="left:1219px;top:874px">6dc</span><span class="t c" style="left:1244px;top:874px;width:54px">10</span><span class="t c" style="left:1298px;top:874px;width:60px">8</span><span class="t c" style="left:1358px;top:874px;width:57px">1f</span>
<span class="t" style="left:1048px;top:891px">CTFMON.EXE</span><span class="t" style="left:1147px;top:891px">0x885bf020</span><span class="t" style="left:1219px;top:891px">840</span><span class="t c" style="left:1244px;top:891px;width:54px">1</span><span class="t c" style="left:1298px;top:891px;width:60px">8</span><span class="t c" style="left:1358px;top:891px;width:57px">2</span>

</div></body></html>
